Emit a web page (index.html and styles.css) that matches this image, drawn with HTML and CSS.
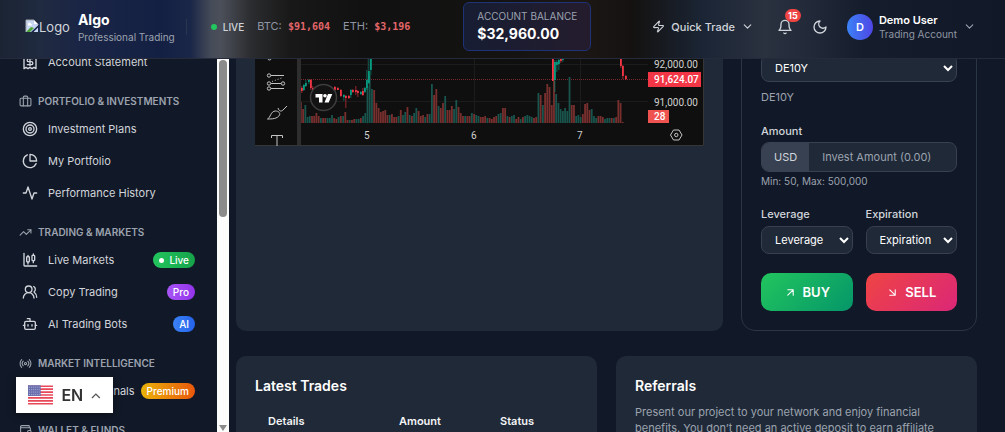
FILE: index.html
```html
<!DOCTYPE html>
<html lang="en">
<head>
    <meta charset="UTF-8">
    <meta name="viewport" content="width=device-width, initial-scale=1.0">
    <link rel="stylesheet" href="styles.css">
    <title>Algo - Professional Trading</title>
</head>
<body>
    <header class="topbar">
        <a class="brand" href="#">
            <span class="brand-logo">
                <svg width="14" height="14" viewBox="0 0 14 14"><path d="M1 1h8l4 4v8H1z" fill="#c6d6f3"/><path d="M9 1v4h4z" fill="#fff"/><path d="M3 5.500a1.500 1.500 0 0 1 3-.5 1.200 1.200 0 0 1 1 1.500H3z" fill="#fff"/><path d="M1 13l5-5 3 1-4 4z" fill="#4ea63b"/><path d="M5.500 13.500L13.500 6v2L8 13.500z" fill="#18234a"/><path d="M1 13V1h8l4 4v1" fill="none" stroke="#a5a9b0"/></svg>
                Logo
            </span>
            <span class="brand-text">
                <span class="brand-name">Algo</span>
                <span class="brand-sub">Professional Trading</span>
            </span>
        </a>
        <div class="ticker">
            <span class="dot"></span>
            <span class="live">LIVE</span>
            <span class="pair">BTC: <b>$91,604</b></span>
            <span class="pair">ETH: <b>$3,196</b></span>
        </div>
        <div class="balance">
            <span class="balance-label">ACCOUNT BALANCE</span>
            <span class="balance-value">$32,960.00</span>
        </div>
        <div class="actions">
            <button class="quick">
                <svg class="icon" width="13" height="13" viewBox="0 0 24 24"><path d="M4 14a1 1 0 0 1-.78-1.630l9.900-10.200a.5.5 0 0 1 .86.460l-1.920 6.020A1 1 0 0 0 13 10h7a1 1 0 0 1 .78 1.630l-9.900 10.200a.5.5 0 0 1-.86-.46l1.920-6.020A1 1 0 0 0 11 14z"/></svg>
                Quick Trade
                <svg class="icon" width="13" height="13" viewBox="0 0 24 24"><path d="m6 9 6 6 6-6"/></svg>
            </button>
            <button class="bell" aria-label="Notifications">
                <svg class="icon" width="16" height="16" viewBox="0 0 24 24"><path d="M10.300 21a1.940 1.940 0 0 0 3.400 0"/><path d="M6 8a6 6 0 0 1 12 0c0 7 3 9 3 9H3s3-2 3-9"/></svg>
                <span class="count">15</span>
            </button>
            <button class="theme" aria-label="Theme">
                <svg class="icon" width="16" height="16" viewBox="0 0 24 24"><path d="M12 3a6 6 0 0 0 9 9 9 9 0 1 1-9-9Z"/></svg>
            </button>
            <button class="user">
                <span class="avatar">D</span>
                <span class="user-text">
                    <span class="user-name">Demo User</span>
                    <span class="user-sub">Trading Account</span>
                </span>
                <svg class="icon dim" width="13" height="13" viewBox="0 0 24 24"><path d="m6 9 6 6 6-6"/></svg>
            </button>
        </div>
    </header>

    <div class="layout">
        <aside class="sidebar">
            <nav class="menu">
                <a class="item" href="#"><svg class="icon" width="16" height="16" viewBox="0 0 24 24"><path d="M3 2h18v20l-3-2-3 2-3-2-3 2-3-2-3 2z"/><path d="M16 7h-6a2 2 0 1 0 0 4.500h4a2 2 0 1 1 0 4.500H8"/><path d="M12 17.500v-12"/></svg>Account Statement</a>

                <h3 class="group"><svg class="icon" width="13" height="13" viewBox="0 0 24 24"><rect x="2" y="6" width="20" height="14" rx="2"/><path d="M16 20V4a2 2 0 0 0-2-2h-4a2 2 0 0 0-2 2v16"/></svg>PORTFOLIO &amp; INVESTMENTS</h3>
                <a class="item" href="#"><svg class="icon" width="16" height="16" viewBox="0 0 24 24"><circle cx="12" cy="12" r="10"/><circle cx="12" cy="12" r="6"/><circle cx="12" cy="12" r="2"/></svg>Investment Plans</a>
                <a class="item" href="#"><svg class="icon" width="16" height="16" viewBox="0 0 24 24"><path d="M21.210 15.890A10 10 0 1 1 8 2.830"/><path d="M22 12A10 10 0 0 0 12 2v10z"/></svg>My Portfolio</a>
                <a class="item" href="#"><svg class="icon" width="16" height="16" viewBox="0 0 24 24"><path d="M22 12h-4l-3 9L9 3l-3 9H2"/></svg>Performance History</a>

                <h3 class="group"><svg class="icon" width="13" height="13" viewBox="0 0 24 24"><path d="m22 7-8.500 8.500-5-5L2 17"/><path d="M16 7h6v6"/></svg>TRADING &amp; MARKETS</h3>
                <a class="item" href="#"><svg class="icon" width="16" height="16" viewBox="0 0 24 24"><path d="M9 5v2M9 15v3M17 3v2M17 13v3M3 2v18a1 1 0 0 0 1 1h18"/><rect x="7" y="7" width="4" height="8" rx="1"/><rect x="15" y="5" width="4" height="8" rx="1"/></svg>Live Markets<span class="tag green"><i></i>Live</span></a>
                <a class="item" href="#"><svg class="icon" width="16" height="16" viewBox="0 0 24 24"><path d="M18 21a8 8 0 0 0-16 0"/><circle cx="10" cy="8" r="5"/><path d="M22 20c0-3.370-2-6.500-4-8a5 5 0 0 0-.45-8.300"/></svg>Copy Trading<span class="tag purple">Pro</span></a>
                <a class="item" href="#"><svg class="icon" width="16" height="16" viewBox="0 0 24 24"><path d="M12 8V4H8"/><rect x="4" y="8" width="16" height="12" rx="2"/><path d="M2 14h2M20 14h2M15 13v2M9 13v2"/></svg>AI Trading Bots<span class="tag blue">AI</span></a>

                <h3 class="group"><svg class="icon" width="13" height="13" viewBox="0 0 24 24"><path d="M4.900 19.100C1 15.200 1 8.800 4.900 4.900M7.800 16.200c-2.300-2.300-2.300-6.100 0-8.500M16.200 7.800c2.300 2.300 2.300 6.100 0 8.500M19.100 4.900C23 8.800 23 15.100 19.100 19"/><circle cx="12" cy="12" r="2"/></svg>MARKET INTELLIGENCE</h3>
                <a class="item" href="#"><svg class="icon" width="16" height="16" viewBox="0 0 24 24"><path d="M2 20h.01M7 20v-4M12 20v-8M17 20V8M22 4v16"/></svg>Premium Signals<span class="tag orange">Premium</span></a>

                <h3 class="group"><svg class="icon" width="13" height="13" viewBox="0 0 24 24"><path d="M19 7V4a1 1 0 0 0-1-1H5a2 2 0 0 0 0 4h15a1 1 0 0 1 1 1v4h-3a2 2 0 0 0 0 4h3a1 1 0 0 0 1-1v-2a1 1 0 0 0-1-1"/><path d="M3 5v14a2 2 0 0 0 2 2h15a1 1 0 0 0 1-1v-4"/></svg>WALLET &amp; FUNDS</h3>
            </nav>
            <div class="scrollbar">
                <div class="thumb"></div>
                <div class="arrow"></div>
            </div>
        </aside>

        <main class="content">
            <div class="row trade-row">
                <section class="card chart-card">
                    <svg class="chart" id="chart" viewBox="255 50 449 96">
                        <rect x="255" y="50" width="449" height="96" fill="#0f0f0f"/>
                        <g stroke="#1c1c1c">
                            <path d="M301 64.500H648M301 101.500H648M367.500 50V124M474.500 50V124M580.500 50V124"/>
                        </g>
                        <path d="M301 79.500H648" stroke="#7a2630" stroke-dasharray="1 1"/>
                        <g id="volume"></g>
                        <g id="candles"></g>
                        <rect x="297" y="50" width="4" height="96" fill="#2e2e2e"/>
                        <path d="M255 145.500H703.500V50" fill="none" stroke="#363636"/>
                        <!-- drawing tools -->
                        <g fill="none" stroke="#c4c4c4">
                            <circle cx="269.500" cy="58.500" r="1.500"/>
                            <circle cx="269" cy="75.500" r="1.700"/><path d="M271 75.500h13"/>
                            <circle cx="269" cy="83.500" r="1.700"/><path d="M271 83.500h10"/><circle cx="283" cy="83.500" r="1.700"/>
                            <circle cx="269" cy="88.500" r="1.700"/><path d="M271 88.500h13"/>
                            <path d="M272 81.500l11-4" stroke-dasharray="1 2"/>
                            <path d="M267.500 119c3-1 3-8 8-8 3 0 5 2 4 4-2 4-8 4-12 4zM278 108c1 3 3 4 5 2l4-4"/>
                            <path d="M271.500 138v-2.500h11v2.500M277 135.500V146"/>
                            <path d="M673.500 130h5.500l3 5-3 5h-5.500l-3-5z"/><circle cx="676.300" cy="135" r="1.700"/>
                        </g>
                        <circle cx="323.500" cy="97.500" r="13" fill="#131313" stroke="#3d3d3d" stroke-width="1.500"/>
                        <path d="M315.500 94h7v8.500h-3.500v-5h-3.500zM328 94h4.300l-3.600 8.500h-4.200z" fill="#fff"/><circle cx="325" cy="95.700" r="1.800" fill="#fff"/>
                        <rect x="648" y="72" width="53" height="15" fill="#f23645"/>
                        <rect x="648" y="110" width="21" height="13" fill="#ef5350"/>
                        <g class="chart-text">
                            <text x="654" y="68">92,000.00</text>
                            <text class="mark" x="654" y="83">91,624.07</text>
                            <text x="654" y="106">91,000.00</text>
                            <text class="mark" x="654" y="120">28</text>
                            <text x="364" y="139">5</text>
                            <text x="471" y="139">6</text>
                            <text x="577" y="139">7</text>
                        </g>
                    </svg>
                </section>

                <form class="panel">
                    <select class="field" aria-label="Asset"><option>DE10Y</option></select>
                    <p class="hint asset">DE10Y</p>
                    <label class="label strong" for="amount">Amount</label>
                    <div class="amount">
                        <span class="unit">USD</span>
                        <input type="text" id="amount" placeholder="Invest Amount (0.00)">
                    </div>
                    <p class="hint">Min: 50, Max: 500,000</p>
                    <div class="pair-grid options">
                        <div>
                            <label class="label" for="leverage">Leverage</label>
                            <select class="field" id="leverage"><option>Leverage</option></select>
                        </div>
                        <div>
                            <label class="label" for="expiration">Expiration</label>
                            <select class="field" id="expiration"><option>Expiration</option></select>
                        </div>
                    </div>
                    <div class="pair-grid">
                        <button type="button" class="order buy"><svg class="icon" width="13" height="13" viewBox="0 0 24 24"><path d="M7 7h10v10M7 17 17 7"/></svg>BUY</button>
                        <button type="button" class="order sell"><svg class="icon" width="13" height="13" viewBox="0 0 24 24"><path d="m7 7 10 10M17 7v10H7"/></svg>SELL</button>
                    </div>
                </form>
            </div>

            <div class="row half-row">
                <section class="card">
                    <h2>Latest Trades</h2>
                    <table class="trades">
                        <thead>
                            <tr><th class="col-details">Details</th><th class="col-amount">Amount</th><th>Status</th></tr>
                        </thead>
                    </table>
                </section>
                <section class="card">
                    <h2>Referrals</h2>
                    <p class="about">Present our project to your network and enjoy financial benefits. You don’t need an active deposit to earn affiliate</p>
                </section>
            </div>
        </main>
    </div>

    <button class="lang">
        <svg width="26" height="20" viewBox="0 0 26 20">
            <rect width="26" height="20" fill="#fff"/>
            <path d="M0 1h26M0 4h26M0 7h26M0 10h26M0 13h26M0 16h26M0 19h26" stroke="#e8485a" stroke-width="1.700"/>
            <rect width="13" height="11" fill="#6a6fae"/>
            <path d="M1 2h12M1 4.500h12M1 7h12M1 9.500h12" stroke="#a9acd3" stroke-width="1" stroke-dasharray="1 1"/>
        </svg>
        EN
        <svg width="10" height="7" viewBox="0 0 10 7"><path d="M1 6l4-4 4 4" fill="none" stroke="#555" stroke-width="1.300"/></svg>
    </button>

    <script src="chart.js"></script>
</body>
</html>
```

FILE: styles.css
```css
* {
    box-sizing: border-box;
    margin: 0;
    padding: 0;
}

body {
    height: 100vh;
    overflow: hidden;
    background: #111827;
    color: #e5e7eb;
    font-family: Inter, "Liberation Sans", sans-serif;
    font-size: 11px;
    line-height: 16px;
}

a {
    color: inherit;
    text-decoration: none;
}

button, input, select {
    font: inherit;
    color: inherit;
}

button {
    border: 0;
    background: none;
    cursor: pointer;
}

.icon {
    flex: none;
    fill: none;
    stroke: currentColor;
    stroke-width: 2;
    stroke-linecap: round;
    stroke-linejoin: round;
}

/* top bar */
.topbar {
    position: fixed;
    top: 0;
    left: 0;
    right: 0;
    z-index: 10;
    display: flex;
    align-items: center;
    height: 59px;
    padding: 0 29px 5px 25px;
    border-bottom: 1px solid #252b3a;
    background: linear-gradient(90deg, #1b2433 0, #202a40 4%, #1a2546 8%, #142043 16%, #1b2748 19%, #454b58 21%, #4b4f59 22%, #2b2c2f 25%, #181818 29%, #111 36%, #141312 50%, #1c1715 58%, #141211 63%, #171a20 66%, #1b2535 70%, #2a313f 76%, #232b3a 80%, #151d2d 86%, #111827 100%);
}

.brand {
    display: flex;
    align-items: center;
    gap: 8px;
    padding-right: 11px;
    border-right: 1px solid #2a3550;
    height: 16px;
}

.brand-logo {
    display: flex;
    font-size: 13px;
    color: #d1d5db;
}

.brand-text, .user-text {
    display: flex;
    flex-direction: column;
    text-align: left;
}

.brand-name {
    font-size: 14px;
    line-height: 20px;
    font-weight: 700;
    color: #fff;
}

.brand-sub {
    font-size: 10px;
    line-height: 14px;
    color: #9ca3af;
}

.ticker {
    display: flex;
    align-items: center;
    margin-left: 24px;
}

.dot {
    width: 6px;
    height: 6px;
    border-radius: 50%;
    background: #22c55e;
}

.live {
    margin-left: 6px;
    font-size: 10px;
    font-weight: 500;
    color: #d1d5db;
}

.pair {
    margin-left: 13px;
    color: #8f96a3;
}

.pair b {
    margin-left: 3px;
    font-family: "DejaVu Sans Mono", monospace;
    font-size: 10px;
    color: #e2666a;
}

.balance {
    display: flex;
    flex-direction: column;
    margin-left: 53px;
    padding: 5px 13px 0;
    height: 49px;
    border: 1px solid #1e3277;
    border-radius: 6px;
    background: linear-gradient(90deg, #171d33, #241c2d);
}

.balance-label {
    font-size: 10px;
    color: #9ca3af;
}

.balance-value {
    font-size: 14px;
    line-height: 20px;
    font-weight: 700;
    color: #fff;
}

.actions {
    display: flex;
    align-items: center;
    margin-left: auto;
    color: #d1d5db;
}

.quick {
    display: flex;
    align-items: center;
    gap: 6px;
    font-weight: 500;
}

.bell {
    position: relative;
    display: flex;
    margin-left: 23px;
}

.count {
    position: absolute;
    top: -10px;
    right: -8px;
    min-width: 16px;
    border-radius: 8px;
    background: #ef4444;
    color: #fff;
    font-size: 9px;
    line-height: 13px;
    font-weight: 700;
}

.theme {
    display: flex;
    margin-left: 19px;
}

.user {
    display: flex;
    align-items: center;
    margin-left: 19px;
}

.avatar {
    width: 26px;
    height: 26px;
    margin-right: 6px;
    border-radius: 50%;
    background: linear-gradient(90deg, #3b82f6, #4f46e5);
    color: #fff;
    line-height: 26px;
    font-weight: 600;
}

.user-text {
    line-height: 14px;
    margin-right: 6px;
}

.user-name {
    font-weight: 600;
    color: #fff;
}

.user-sub {
    font-size: 10px;
    color: #8f96a3;
}

.dim {
    color: #9ca3af;
}

/* sidebar */
.layout {
    display: flex;
    height: 100%;
    overflow: hidden;
}

.sidebar {
    flex: none;
    display: flex;
    width: 230px;
}

.menu {
    flex: 1;
    padding: 46px 22px 0 19px;
    overflow: hidden;
}

.item {
    display: flex;
    align-items: center;
    height: 32px;
    padding-left: 3px;
    gap: 10px;
    color: #d1d5db;
    white-space: nowrap;
}

.group {
    display: flex;
    align-items: center;
    gap: 6px;
    padding: 15px 0 4px;
    font-size: 10px;
    font-weight: 600;
    color: #9ca3af;
}

.tag {
    display: flex;
    align-items: center;
    gap: 5px;
    margin-left: auto;
    padding: 0 6px;
    border-radius: 8px;
    color: #fff;
    font-size: 10px;
    font-weight: 500;
}

.item .orange {
    margin-left: -4px;
}

.tag i {
    width: 5px;
    height: 5px;
    border-radius: 50%;
    background: #fff;
}

.green {
    background: linear-gradient(90deg, #22c55e, #16a34a);
}

.purple {
    background: linear-gradient(90deg, #a855f7, #9333ea);
}

.blue {
    background: linear-gradient(90deg, #3b82f6, #2563eb);
}

.orange {
    background: linear-gradient(90deg, #eab308, #ea580c);
}

.scrollbar {
    display: flex;
    flex-direction: column;
    align-items: center;
    width: 12px;
    margin-right: 1px;
    padding-top: 60px;
    background: #fcfcfc;
}

.thumb {
    width: 8px;
    height: 157px;
    border-radius: 4px;
    background: #8b8b8b;
}

.arrow {
    margin-top: auto;
    margin-bottom: 1px;
    border: 4px solid transparent;
    border-top: 6px solid #8b8b8b;
    border-bottom: 0;
}

/* content */
.content {
    flex: 1;
    min-width: 0;
    padding: 0 28px 0 6px;
}

.row {
    display: grid;
}

.trade-row {
    grid-template-columns: minmax(0, 1fr) 236px;
    gap: 18px;
    margin-bottom: 25px;
}

.half-row {
    grid-template-columns: 1fr 1fr;
    gap: 19px;
}

.card {
    padding: 19px;
    border-radius: 10px;
    background: #1f2937;
}

.chart-card {
    padding-top: 50px;
}

.chart {
    display: block;
    width: 100%;
}

.chart-text {
    font-size: 10px;
    fill: #d1d1d1;
    font-family: Roboto, sans-serif;
}

.mark {
    fill: #fff;
    font-weight: 500;
}

.panel {
    padding: 53px 19px 19px;
    border: 1px solid #2a3545;
    border-radius: 14px;
}

.field {
    display: block;
    width: 100%;
    height: 28px;
    padding-left: 9px;
    border: 1px solid #374151;
    border-radius: 8px;
    background: #1f2937;
    color: #fff;
}

.hint {
    margin-top: 1px;
    font-size: 10px;
    color: #9ca3af;
}

.asset {
    margin-top: 7px;
    font-size: 11px;
}

.label {
    display: block;
    margin-bottom: 4px;
    font-weight: 500;
    color: #d1d5db;
}

.strong {
    margin: 18px 0 3px;
}

.amount {
    display: flex;
    height: 30px;
    border: 1px solid #374151;
    border-radius: 8px;
    background: #1f2937;
    overflow: hidden;
}

.unit {
    padding: 0 12px;
    background: #374151;
    line-height: 28px;
    color: #d1d5db;
}

.amount input {
    flex: 1;
    min-width: 0;
    padding: 0 13px;
    border: 0;
    background: none;
}

.amount input::placeholder {
    color: #9ca3af;
}

.pair-grid {
    display: grid;
    grid-template-columns: 1fr 1fr;
    gap: 13px;
}

.options {
    margin: 17px 0 19px;
}

.order {
    display: flex;
    align-items: center;
    justify-content: center;
    gap: 6px;
    height: 38px;
    border-radius: 10px;
    color: #fff;
    font-size: 13px;
    font-weight: 600;
}

.buy {
    background: linear-gradient(135deg, #22c55e, #059669);
}

.sell {
    background: linear-gradient(135deg, #ef4444, #db2777);
}

h2 {
    font-size: 14px;
    line-height: 22px;
    font-weight: 600;
    color: #fff;
}

.trades {
    width: 100%;
    margin-top: 4px;
    border-collapse: collapse;
    table-layout: fixed;
}

.trades th {
    padding: 12px 13px;
    text-align: left;
    font-weight: 600;
    color: #f3f4f6;
}

.col-details {
    width: 131px;
}

.col-amount {
    width: 101px;
}

.about {
    margin-top: 7px;
    color: #9ca3af;
}

/* language switcher */
.lang {
    position: fixed;
    left: 16px;
    bottom: 19px;
    z-index: 5;
    display: flex;
    align-items: center;
    gap: 8px;
    width: 97px;
    height: 36px;
    padding: 0 12px;
    background: #fff;
    box-shadow: 0 2px 8px rgba(0, 0, 0, 0.4);
    color: #333;
    font-size: 16px;
    font-weight: 600;
}
```

FILE: chart.js
```js
const NS = "http://www.w3.org/2000/svg"
const STEP = 2.22
const BASE = 123

// volume per half hour, negative = falling
const volume = [
    -21, -14, 18, 6, 7, -7, -7, -10, -7, 5, -5, -5, 5, 5, 8, -5, -4, 6, -7, 7,
    -11, -3, 3, -3, -4, 4, 4, -5, 7, 10, 37, 48, 34, -33, -20, -15, -11, -12, -13, -8,
    8, -9, -6, -6, 7, -13, 8, 11, -16, 8, -7, 10, 15, -12, -7, -8, 6, -9, 9, 39,
    -28, -34, 17, -15, -20, 27, -13, -13, -17, 14, 23, -16, -10, -7, 7, -7, -7, 10, -9, 8,
    7, -6, -6, -7, 5, -5, -4, -6, -7, 9, 10, -15, -15, 7, -6, 7, 8, -4, -6,
    4, -6, 7, 8, 7, 6, -5, -6, 30, -28, 18, -30, -39, -36, -18, -42, 29, 20, 14, 12,
    15, 12, 46, -18, -18, 7, 8, 6, -9, -19, -20, -13, 14, 7, 5, -7, -7, -6, 4, 5,
    5, -5, 5, -6, -23, -20, -1
]

// x, wick top, wick bottom, body top, body bottom, direction
const candles = [
    [301, 86, 93, 88, 91, -1], [303, 84, 91, 85, 90, 1], [305, 80, 87, 83, 86, 1],
    [308, 79, 84, 80, 82, 1], [310, 79, 90, 80, 88, -1], [312, 86, 92, 88, 91, -1],
    [334, 86, 92, 87, 90, -1], [337, 87, 90, 88, 90, -1], [340, 89, 97, 90, 96, -1],
    [343, 94, 101, 95, 97, 1], [345, 95, 108, 96, 98, -1], [348, 95, 99, 96, 98, -1],
    [350, 89, 98, 90, 95, 1], [352, 89, 93, 90, 92, -1], [355, 86, 95, 90, 92, -1],
    [357, 90, 97, 91, 93, -1], [360, 91, 95, 92, 94, 1], [362, 88, 96, 91, 95, -1],
    [364, 87, 93, 88, 92, 1], [366, 70, 90, 80, 88, 1], [368, 55, 84, 71, 83, 1],
    [370, 50, 75, 50, 70, 1],
    [552, 50, 81, 50, 81, -1], [554, 60, 92, 62, 80, 1], [556, 60, 72, 62, 65, 1],
    [558, 56, 70, 60, 64, 1], [560, 56, 63, 58, 61, -1], [562, 54, 62, 56, 60, 1],
    [620, 50, 68, 50, 66, -1], [622, 65, 79, 66, 76, -1], [625, 75, 80, 76, 79, -1]
]

function rect(parent, x, y, w, h, fill) {
    const r = document.createElementNS(NS, "rect")
    r.setAttribute("x", x)
    r.setAttribute("y", y)
    r.setAttribute("width", w)
    r.setAttribute("height", h)
    r.setAttribute("fill", fill)
    parent.appendChild(r)
}

const bars = document.querySelector("#volume")
volume.forEach((v, i) => {
    const h = Math.abs(v)
    rect(bars, 300 + i * STEP, BASE - h, 1.8, h, v < 0 ? "#78302f" : "#19544d")
})

const sticks = document.querySelector("#candles")
candles.forEach(([x, top, bottom, open, close, dir]) => {
    const color = dir < 0 ? "#f23645" : "#089981"
    rect(sticks, x + 0.6, top, 0.6, bottom - top, color)
    rect(sticks, x, open, 1.8, close - open, color)
})
```
